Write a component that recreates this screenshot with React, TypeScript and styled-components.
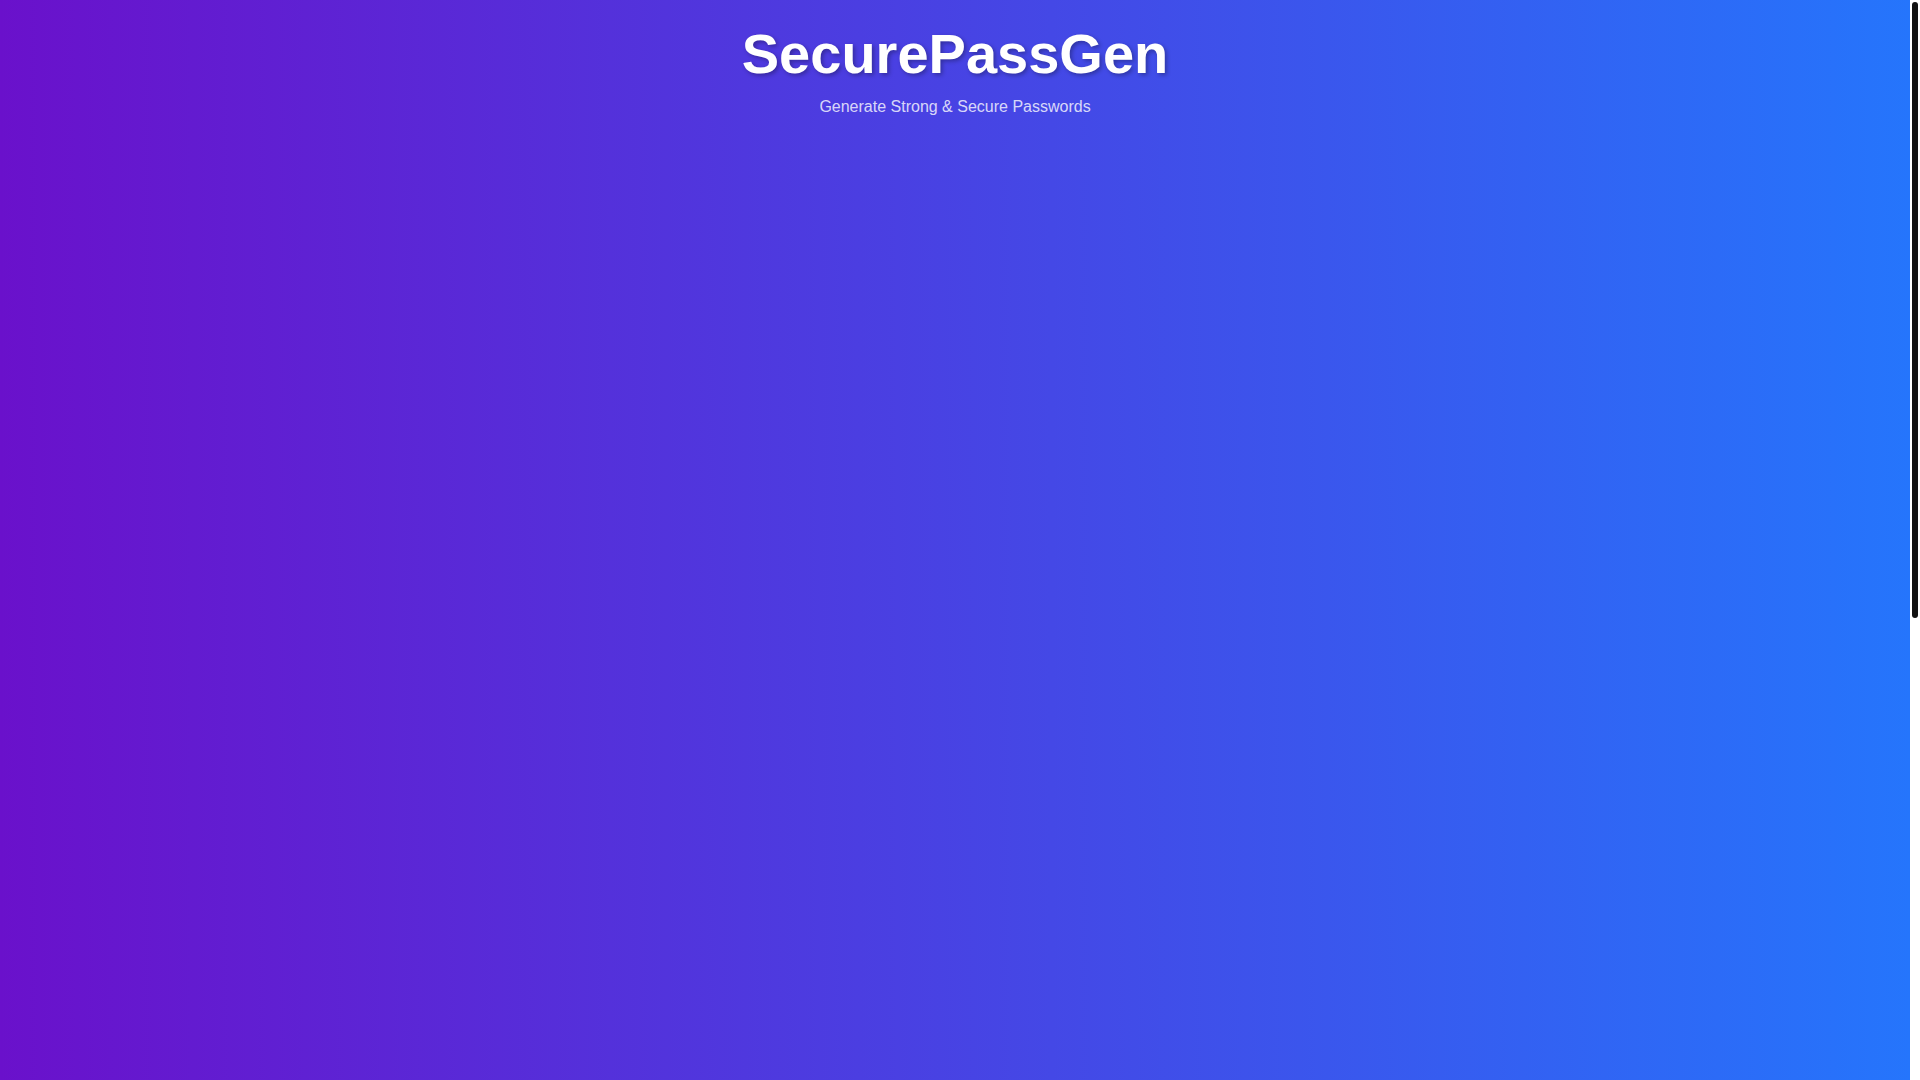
import React from "react";
import styled, { createGlobalStyle } from "styled-components";

const GlobalStyle = createGlobalStyle`
  *, *::before, *::after { box-sizing: border-box; }
  html, body { margin: 0; padding: 0; height: 100%; overflow: hidden; }
  body {
    font-family: "Liberation Sans", Arial, sans-serif;
    background: #ffffff;
    color: #ffffff;
  }
`;

const Shell = styled.div`
  display: flex;
  height: 100vh;
`;

const Viewport = styled.div`
  flex: 1;
  min-width: 0;
  overflow-y: auto;
  scrollbar-width: none;
  background: linear-gradient(to right, #6a11cb 0%, #2575fc 100%);
  &::-webkit-scrollbar { display: none; }
`;

const ScrollRail = styled.div`
  width: 10px;
  flex: none;
  background: #ffffff;
  padding: 2px;
  display: flex;
  flex-direction: column;
`;

const ScrollThumb = styled.div<{ $length: number }>`
  height: ${(p) => p.$length}px;
  background: #111111;
  border-radius: 3px;
`;

const Page = styled.div`
  min-height: 1890px;
  display: flex;
  flex-direction: column;
`;

const Header = styled.header`
  display: flex;
  flex-direction: column;
  align-items: center;
  text-align: center;
  padding: 21px 20px 20px;
`;

const Title = styled.h1`
  margin: 0 0 12px;
  font-size: 56px;
  font-weight: 700;
  line-height: normal;
  color: #ffffff;
  text-shadow: 2px 2px 4px rgba(0, 0, 0, 0.3);
`;

const Subtitle = styled.p`
  margin: 0;
  font-size: 16px;
  line-height: normal;
  color: rgba(255, 255, 255, 0.8);
`;

const Main = styled.main`
  flex: 1;
`;

export default function App() {
  return (
    <>
      <GlobalStyle />
      <Shell>
        <Viewport>
          <Page>
            <Header>
              <Title>SecurePassGen</Title>
              <Subtitle>Generate Strong &amp; Secure Passwords</Subtitle>
            </Header>
            <Main />
          </Page>
        </Viewport>
        <ScrollRail aria-hidden="true">
          <ScrollThumb $length={616} />
        </ScrollRail>
      </Shell>
    </>
  );
}
